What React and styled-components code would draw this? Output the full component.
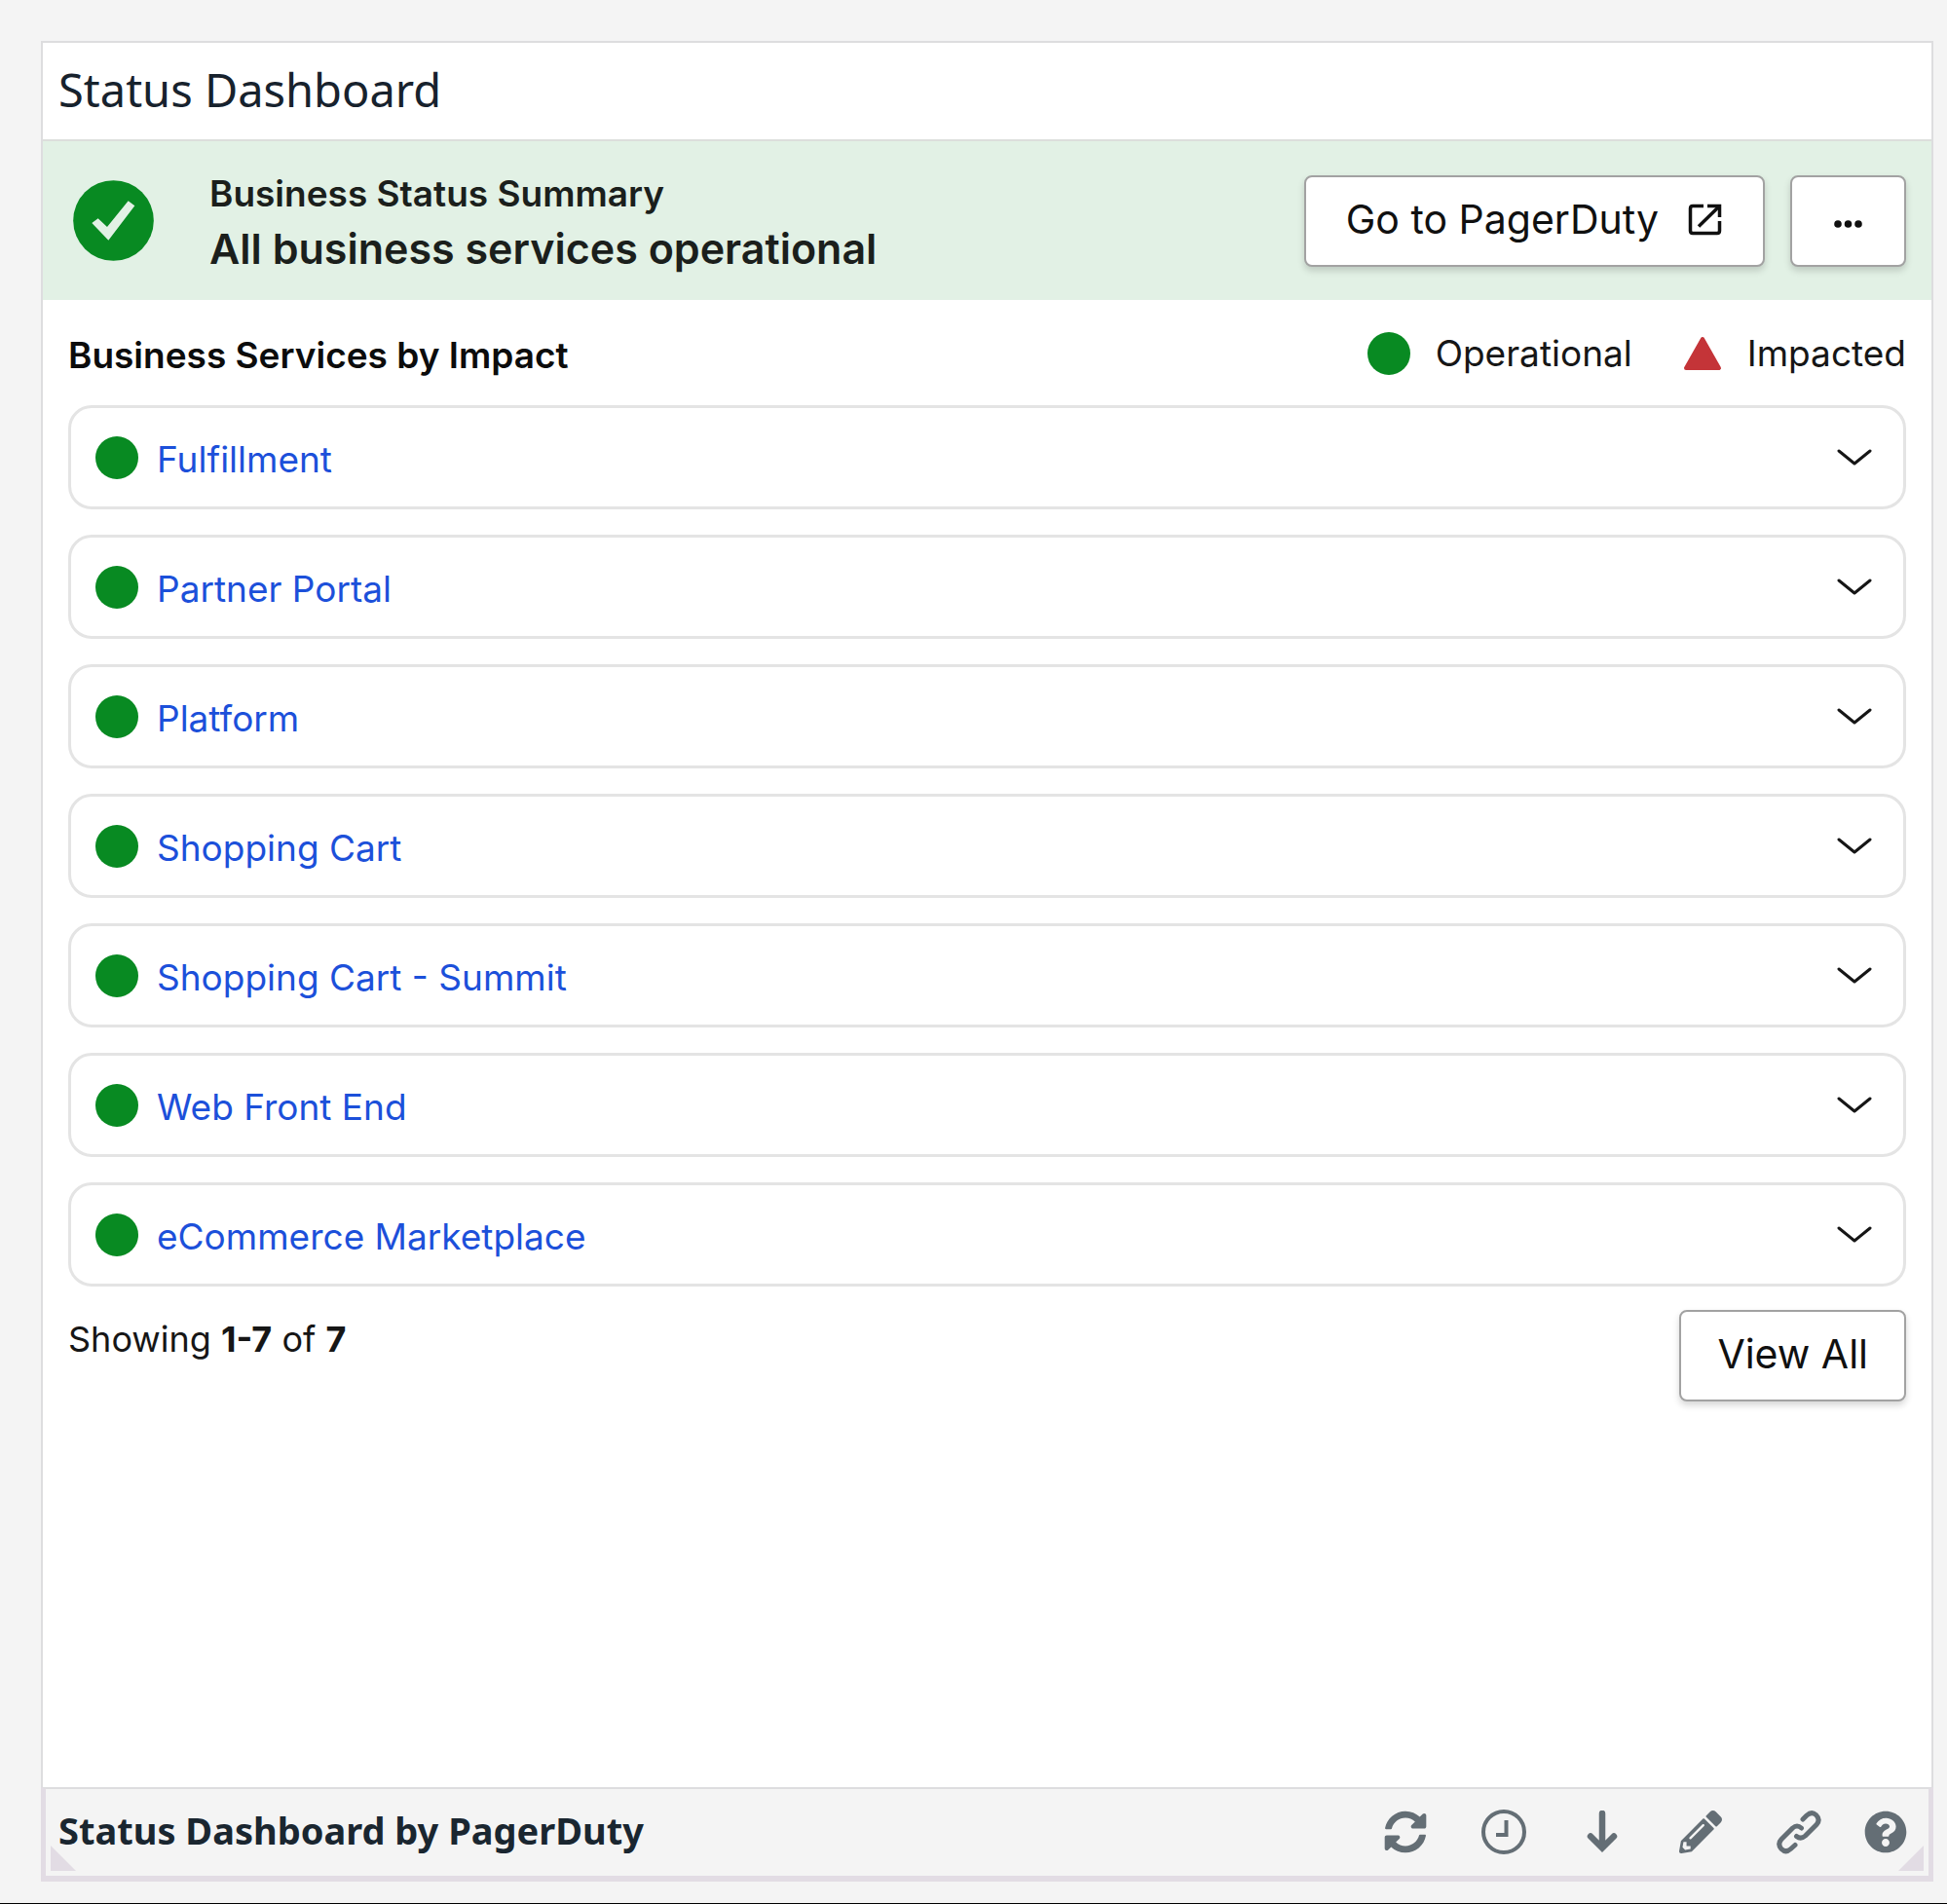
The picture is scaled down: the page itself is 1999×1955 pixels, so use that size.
import React, { useState } from "react";
import styled, { createGlobalStyle } from "styled-components";
import { FaSyncAlt, FaPencilAlt, FaQuestionCircle } from "react-icons/fa";

const GlobalStyle = createGlobalStyle`
  *, *::before, *::after { box-sizing: border-box; }
  body {
    margin: 0;
    background: #f4f4f4;
    font-family: Inter, "Liberation Sans", sans-serif;
    color: #161616;
  }
  button { font: inherit; color: inherit; cursor: pointer; }
`;

const Page = styled.main`
  display: flex;
  flex-direction: column;
  min-height: 100vh;
  padding: 42px 14px 22px 42px;
  border-bottom: 1px solid #000;
`;

const Widget = styled.section`
  flex: 1;
  display: flex;
  flex-direction: column;
`;

const Content = styled.div`
  flex: 1;
  display: flex;
  flex-direction: column;
  background: #fff;
  border: solid #dddddf;
  border-width: 2px 2px 0;
`;

const TitleBar = styled.header`
  padding: 15px 16px 18px;
  border-bottom: 2px solid #dcdedc;
`;

const Title = styled.h1`
  margin: 0;
  font: 400 47px/66px "Noto Sans", sans-serif;
  color: #17222d;
`;

const Banner = styled.div`
  display: flex;
  align-items: center;
  min-height: 163px;
  padding: 0 26px 0 31px;
  background: #e2f1e5;
`;

const CheckBadge = styled.svg`
  flex: none;
  width: 83px;
  height: 83px;
  margin-right: 57px;
`;

const Summary = styled.div`
  flex: 1;
  padding-top: 3px;
  color: #1b1f1c;
`;

const SummaryLabel = styled.h2`
  margin: 0;
  font-size: 37px;
  line-height: 44px;
  font-weight: 600;
`;

const SummaryText = styled.p`
  margin: 0;
  padding-top: 9px;
  font-size: 43px;
  line-height: 50px;
  font-weight: 600;
`;

const Actions = styled.div`
  display: flex;
  gap: 26px;
`;

const buttonPadding = {
  regular: "0 37px 4px",
  wide: "0 41px 4px",
  icon: "6px 29px 0",
};

const Button = styled.button`
  display: flex;
  align-items: center;
  justify-content: center;
  gap: 30px;
  min-width: 119px;
  height: 94px;
  padding: ${(p) => buttonPadding[p.$variant || "regular"]};
  background: #fff;
  border: 2px solid #a2a2a2;
  border-radius: 8px;
  box-shadow: 0 4px 7px rgba(0, 0, 0, 0.16);
  font-size: 41px;
  line-height: 50px;
  color: #101010;
`;

const Services = styled.div`
  flex: 1;
  padding: 28px 26px;
`;

const ServicesHead = styled.div`
  display: flex;
  align-items: center;
  justify-content: space-between;
  padding-bottom: 26px;
`;

const ServicesTitle = styled.h2`
  margin: 0;
  padding-top: 4px;
  font-size: 37px;
  line-height: 44px;
  font-weight: 600;
  color: #0c0c0c;
`;

const Legend = styled.div`
  display: flex;
  gap: 52px;
`;

const LegendItem = styled.span`
  display: flex;
  align-items: center;
  gap: 26px;
  font-size: 37px;
  line-height: 54px;
`;

const Dot = styled.span`
  flex: none;
  width: 44px;
  height: 44px;
  border-radius: 50%;
  background: #088a22;
`;

const List = styled.ul`
  display: flex;
  flex-direction: column;
  gap: 26px;
  margin: 0;
  padding: 0;
  list-style: none;
`;

const Row = styled.li`
  display: flex;
  align-items: center;
  gap: 19px;
  height: 107px;
  padding: 0 24px 0 25px;
  border: 3px solid #e4e4e4;
  border-radius: 24px;
`;

const ServiceLink = styled.a`
  padding-top: 4px;
  font-size: 37px;
  line-height: 44px;
  color: #1c50da;
  text-decoration: none;
`;

const Expand = styled.button`
  display: flex;
  align-items: center;
  justify-content: center;
  width: 52px;
  height: 52px;
  margin-left: auto;
  padding: 0;
  background: none;
  border: 0;
`;

const ListFoot = styled.div`
  display: flex;
  align-items: flex-start;
  justify-content: space-between;
  padding-top: 24px;
`;

const Count = styled.p`
  margin: 0;
  padding-top: 8px;
  font-size: 36px;
  line-height: 44px;

  strong { font-weight: 700; }
`;

const FooterBar = styled.footer`
  position: relative;
  display: flex;
  align-items: center;
  gap: 45px;
  height: 97px;
  padding: 0 22px 2px 13px;
  border: solid #e2dce4;
  border-width: 2px 5px 6px;
  border-top-color: #dddddf;
`;

const FooterTitle = styled.h2`
  flex: 1;
  margin: 0;
  padding-bottom: 4px;
  font: 700 38px/50px "Noto Sans", sans-serif;
  color: #1a2630;
`;

const Tools = styled.div`
  display: flex;
  gap: 57px;
`;

const Tool = styled.button`
  display: flex;
  align-items: center;
  justify-content: center;
  width: 44px;
  height: 44px;
  padding: 0;
  background: none;
  border: 0;
  color: #646e75;

  svg { flex: none; }
`;

const Grip = styled.span`
  position: absolute;
  bottom: 5px;
  ${(p) => p.$side}: 5px;
  width: 26px;
  height: 26px;
  background: #e2dce4;
  clip-path: ${(p) =>
    p.$side === "left" ? "polygon(0 0, 100% 100%, 0 100%)" : "polygon(100% 0, 100% 100%, 0 100%)"};
`;

const services = [
  "Fulfillment",
  "Partner Portal",
  "Platform",
  "Shopping Cart",
  "Shopping Cart - Summit",
  "Web Front End",
  "eCommerce Marketplace",
];

const ExternalIcon = () => (
  <svg width="36" height="34" viewBox="0 0 36 34" fill="none" stroke="currentColor" strokeWidth="3.5" aria-hidden="true">
    <path d="M16 3.5H5Q2.500 3.500 2.500 6V29Q2.500 31.500 5 31.500H30Q32.500 31.500 32.500 29V19" />
    <path d="M20 3.500H32.500V15" />
    <path d="M32 4L11 24.500" />
  </svg>
);

const MoreIcon = () => (
  <svg width="31" height="10" viewBox="0 0 31 10" fill="currentColor" aria-hidden="true">
    <circle cx="5" cy="5" r="3.800" />
    <circle cx="15.500" cy="5" r="3.800" />
    <circle cx="26" cy="5" r="3.800" />
  </svg>
);

const TriangleIcon = () => (
  <svg width="40" height="36" viewBox="0 0 40 36" aria-hidden="true">
    <path d="M20 3L37 33H3Z" fill="#c43438" stroke="#c43438" strokeWidth="4" strokeLinejoin="round" />
  </svg>
);

const ChevronIcon = () => (
  <svg width="38" height="18" viewBox="0 0 38 18" fill="none" stroke="currentColor" strokeWidth="3" strokeLinecap="round" strokeLinejoin="round" aria-hidden="true">
    <path d="M3 2L19 15L35 2" />
  </svg>
);

const ClockIcon = () => (
  <svg width="46" height="46" viewBox="0 0 46 46" fill="none" stroke="currentColor" aria-hidden="true">
    <circle cx="23" cy="23" r="21" strokeWidth="4" />
    <path d="M25.500 11V26H15" strokeWidth="4" />
  </svg>
);

const DownIcon = () => (
  <svg width="32" height="44" viewBox="0 0 32 44" aria-hidden="true">
    <path d="M16 3V38M4 26.500L16 38.500L28 26.500" fill="none" stroke="currentColor" strokeWidth="6.500" strokeLinecap="round" />
  </svg>
);

const LinkIcon = () => (
  <svg width="46" height="46" viewBox="0 0 46 46" fill="none" stroke="currentColor" strokeWidth="5" strokeLinecap="round" strokeLinejoin="round" aria-hidden="true">
    <path d="M27 10L31 6Q36 1.500 40.500 5.500Q45.500 10.500 41 15.500L29.500 27Q25 31 20.500 27.500" />
    <path d="M25.500 19Q21 15 16.500 19L5 30.500Q0.500 35.500 5 40.500Q9.500 45 14.500 40.500L19 36.500" />
  </svg>
);

function ServiceRow({ name }) {
  const [open, setOpen] = useState(false);
  return (
    <Row>
      <Dot />
      <ServiceLink href="#">{name}</ServiceLink>
      <Expand aria-label={name} aria-expanded={open} onClick={() => setOpen(!open)}>
        <ChevronIcon />
      </Expand>
    </Row>
  );
}

export default function App() {
  return (
    <Page>
      <GlobalStyle />
      <Widget>
        <Content>
          <TitleBar>
            <Title>Status Dashboard</Title>
          </TitleBar>
          <Banner>
            <CheckBadge viewBox="0 0 249 249" aria-hidden="true">
              <circle cx="124.500" cy="124.500" r="124" fill="#088a22" />
              <path d="M58 132L77 118L105 144L170 64L190 79L109 185Z" fill="#e2f1e5" />
            </CheckBadge>
            <Summary>
              <SummaryLabel>Business Status Summary</SummaryLabel>
              <SummaryText>All business services operational</SummaryText>
            </Summary>
            <Actions>
              <Button $variant="wide">
                Go to PagerDuty
                <ExternalIcon />
              </Button>
              <Button $variant="icon" aria-label="More">
                <MoreIcon />
              </Button>
            </Actions>
          </Banner>
          <Services>
            <ServicesHead>
              <ServicesTitle>Business Services by Impact</ServicesTitle>
              <Legend>
                <LegendItem>
                  <Dot />
                  Operational
                </LegendItem>
                <LegendItem>
                  <TriangleIcon />
                  Impacted
                </LegendItem>
              </Legend>
            </ServicesHead>
            <List>
              {services.map((name) => (
                <ServiceRow key={name} name={name} />
              ))}
            </List>
            <ListFoot>
              <Count>
                Showing <strong>1-7</strong> of <strong>7</strong>
              </Count>
              <Button>View All</Button>
            </ListFoot>
          </Services>
        </Content>
        <FooterBar>
          <FooterTitle>Status Dashboard by PagerDuty</FooterTitle>
          <Tools>
            <Tool aria-label="Refresh"><FaSyncAlt size={44} /></Tool>
            <Tool aria-label="History"><ClockIcon /></Tool>
            <Tool aria-label="Download"><DownIcon /></Tool>
            <Tool aria-label="Edit"><FaPencilAlt size={44} /></Tool>
            <Tool aria-label="Copy link"><LinkIcon /></Tool>
          </Tools>
          <Tool aria-label="Help"><FaQuestionCircle size={44} /></Tool>
          <Grip $side="left" />
          <Grip $side="right" />
        </FooterBar>
      </Widget>
    </Page>
  );
}
